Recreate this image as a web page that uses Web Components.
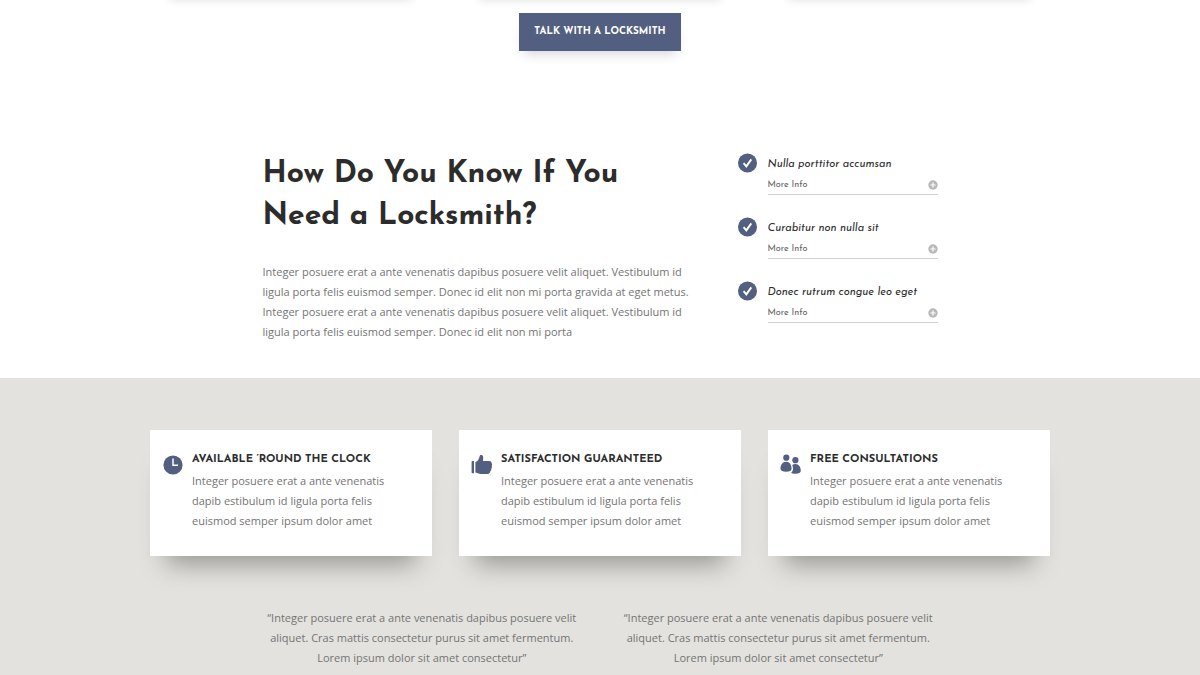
<!DOCTYPE html>
<html lang="en">
<head>
<meta charset="utf-8">
<meta name="viewport" content="width=device-width, initial-scale=1">
<title>Locksmith</title>
<style>
  :root {
    --brand: #535f80;
    --ink: #2c2c2c;
    --text: #747474;
    --sand: #e3e2de;
    --display: "Josefin Sans", Lato, "Liberation Sans", sans-serif;
  }
  body {
    margin: 0;
    background: #fff;
    color: var(--text);
    font: 400 11px/20px "Open Sans", "Liberation Sans", sans-serif;
    overflow-x: hidden;
  }
</style>
</head>
<body>
<locksmith-page></locksmith-page>

<script>
  function define(name, html) {
    const template = document.createElement('template');
    template.innerHTML = html;
    customElements.define(name, class extends HTMLElement {
      constructor() {
        super();
        this.attachShadow({ mode: 'open' }).append(template.content.cloneNode(true));
      }
    });
  }

  define('cta-button', `
    <style>
      :host { display: block; }
      button {
        display: block;
        margin: 0 auto;
        padding: 9px 15px;
        border: 0;
        background: var(--brand);
        color: #fff;
        font: 700 10px/20px var(--display);
        text-transform: uppercase;
        box-shadow: 0 8px 12px -6px rgba(60, 60, 110, .25);
        cursor: pointer;
      }
    </style>
    <button type="button"><slot></slot></button>`);

  define('card-shadows', `
    <style>
      :host {
        display: grid;
        grid-template-columns: repeat(3, 1fr);
        gap: 27px;
        max-width: 900px;
        margin: 0 auto;
      }
      i { height: 12px; margin: -12px 20px 0; box-shadow: 0 0 8px rgba(0, 0, 0, .13); }
    </style>
    <i></i><i></i><i></i>`);

  define('check-item', `
    <style>
      :host { display: grid; grid-template-columns: 20px 1fr; column-gap: 10px; }
      svg { display: block; }
      h3 {
        margin: 0;
        color: var(--ink);
        font: italic 400 11px/24px var(--display);
      }
      button {
        display: flex;
        justify-content: space-between;
        align-items: center;
        width: 100%;
        padding: 0 0 1px;
        border: 0;
        border-bottom: 1px solid #d2d2d2;
        background: none;
        color: #666;
        font: 400 9px/16px var(--display);
        cursor: pointer;
      }
    </style>
    <svg width="20" height="20" viewBox="0 0 20 20" aria-hidden="true">
      <circle cx="9.5" cy="10" r="9.5" fill="var(--brand)"/>
      <path d="M5.600 10.200l2.700 3.200 5-7" fill="none" stroke="#fff" stroke-width="1.900"/>
    </svg>
    <div>
      <h3><slot></slot></h3>
      <button type="button">More Info
        <svg width="10" height="10" viewBox="0 0 10 10" aria-hidden="true">
          <circle cx="5" cy="5" r="4.7" fill="#b9b9b9"/>
          <path d="M5 2.4v5.2M2.4 5h5.2" stroke="#fff" stroke-width="1.2"/>
        </svg>
      </button>
    </div>`);

  define('intro-section', `
    <style>
      :host {
        display: grid;
        grid-template-columns: 437fr 200fr;
        gap: 38px;
        max-width: 675px;
        margin: 0 auto;
        padding: 100px 0 36px;
      }
      h2 {
        margin: 0 0 24px;
        padding-top: 3px;
        color: var(--ink);
        font: 700 30px/42px var(--display);
      }
      p { margin: 0; }
      .checks { display: grid; align-content: start; row-gap: 22px; padding-top: 2px; }
    </style>
    <div>
      <h2>How Do You Know If You<br>Need a Locksmith?</h2>
      <p>Integer posuere erat a ante venenatis dapibus posuere velit aliquet. Vestibulum id ligula porta felis euismod semper. Donec id elit non mi porta gravida at eget metus. Integer posuere erat a ante venenatis dapibus posuere velit aliquet. Vestibulum id ligula porta felis euismod semper. Donec id elit non mi porta</p>
    </div>
    <div class="checks">
      <check-item>Nulla porttitor accumsan</check-item>
      <check-item>Curabitur non nulla sit</check-item>
      <check-item>Donec rutrum congue leo eget</check-item>
    </div>`);

  define('feature-card', `
    <style>
      :host {
        display: grid;
        grid-template-columns: 22px 1fr;
        column-gap: 8px;
        padding: 20px 32px 25px 12px;
        background: #fff;
        box-shadow: 0 24px 24px -16px rgba(0, 0, 0, .34);
      }
      ::slotted(svg) { display: block; margin-top: 4px; fill: var(--brand); }
      h3 {
        margin: 0 0 1px;
        color: var(--ink);
        font: 700 11px/20px var(--display);
        text-transform: uppercase;
      }
      p { margin: 0; }
    </style>
    <slot name="icon"></slot>
    <div>
      <h3><slot name="title"></slot></h3>
      <p><slot></slot></p>
    </div>`);

  define('client-quote', `
    <style>
      :host { display: block; text-align: center; }
      blockquote { margin: 0; }
    </style>
    <blockquote><slot></slot></blockquote>`);

  define('features-section', `
    <style>
      :host { display: block; padding: 52px 0 7px; background: var(--sand); }
      .cards {
        display: grid;
        grid-template-columns: repeat(3, 1fr);
        gap: 27px;
        max-width: 900px;
        margin: 0 auto;
      }
      .quotes {
        display: grid;
        grid-template-columns: 1fr 1fr;
        gap: 38px;
        max-width: 675px;
        margin: 52px auto 0;
      }
    </style>
    <div class="cards">
      <feature-card>
        <svg slot="icon" width="22" height="22" viewBox="0 0 22 22" aria-hidden="true">
          <circle cx="11" cy="11" r="9.6"/>
          <path d="M11 4.5v6.7h5" fill="none" stroke="#fff" stroke-width="1.5"/>
        </svg>
        <span slot="title">Available ’Round the Clock</span>
        Integer posuere erat a ante venenatis dapib estibulum id ligula porta felis euismod semper ipsum dolor amet
      </feature-card>
      <feature-card>
        <svg slot="icon" width="22" height="22" viewBox="0 0 22 22" aria-hidden="true">
          <path d="M0.6 7.8Q.6 7 1.4 7H3v12.2H1.4q-.8 0-.8-.8z"/>
          <path d="M4.4 8.2C7 7 8.2 4.700 8.600 2.200 8.800.7 12 .2 12.200 3.200c.1 1.500-.1 2.700-.3 3.700h6.400c1.700 0 2.400 1 2.200 2 .8.8.8 2.200.2 2.900.5 1 .3 2.100-.4 2.800.3 1.100-.2 2-.9 2.500-.1 1.800-1.100 2.800-3 2.900H10c-2 0-3-1-5.600-1.500z"/>
        </svg>
        <span slot="title">Satisfaction Guaranteed</span>
        Integer posuere erat a ante venenatis dapib estibulum id ligula porta felis euismod semper ipsum dolor amet
      </feature-card>
      <feature-card>
        <svg slot="icon" width="22" height="22" viewBox="0 0 22 22" aria-hidden="true">
          <circle cx="6.300" cy="3.700" r="3.100"/>
          <path d="M6.200 7.800c3.500 0 5.400 3.300 5.400 7 0 2-1.900 3-5.400 3s-5.700-1-5.700-3c0-3.700 2-7 5.700-7z"/>
          <circle cx="15.400" cy="6.200" r="3.100"/>
          <path d="M12.200 11c1-.7 2-1 3.200-1 3.500 0 5.400 3 5.400 6.800 0 2-2 3-5.400 3-1.700 0-3.400-.3-4.300-1 1.300-1 1.900-2.300 1.900-4 0-1.300-.3-2.700-.8-3.800z"/>
        </svg>
        <span slot="title">Free Consultations</span>
        Integer posuere erat a ante venenatis dapib estibulum id ligula porta felis euismod semper ipsum dolor amet
      </feature-card>
    </div>
    <div class="quotes">
      <client-quote>“Integer posuere erat a ante venenatis dapibus posuere velit aliquet. Cras mattis consectetur purus sit amet fermentum. Lorem ipsum dolor sit amet consectetur”</client-quote>
      <client-quote>“Integer posuere erat a ante venenatis dapibus posuere velit aliquet. Cras mattis consectetur purus sit amet fermentum. Lorem ipsum dolor sit amet consectetur”</client-quote>
    </div>`);

  define('locksmith-page', `
    <style>
      :host { display: flow-root; }
      cta-button { padding-top: 13px; }
    </style>
    <card-shadows></card-shadows>
    <cta-button>Talk with a Locksmith</cta-button>
    <main>
      <intro-section></intro-section>
      <features-section></features-section>
    </main>`);
</script>
</body>
</html>
